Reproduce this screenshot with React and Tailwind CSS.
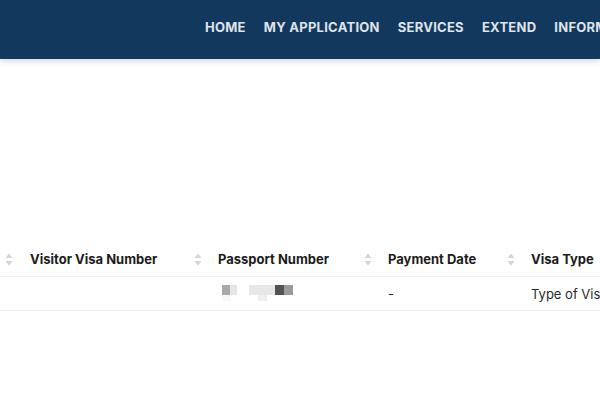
import React from 'react';

const navItems = ['HOME', 'MY APPLICATION', 'SERVICES', 'EXTEND', 'INFORMATION'];

const SortIcon = () => (
  <svg width="8" height="13" viewBox="0 0 8 13" className="shrink-0">
    <path d="M4 0.5 L7.5 5 L0.5 5 Z" fill="#d6d6d6" />
    <path d="M4 12.5 L7.5 8 L0.5 8 Z" fill="#d6d6d6" />
  </svg>
);

const columns = [
  { title: 'Visitor Visa Number', width: 'w-[188px]' },
  { title: 'Passport Number', width: 'w-[170px]' },
  { title: 'Payment Date', width: 'w-[143px]' },
  { title: 'Visa Type', width: 'w-[160px]' },
];

// blurred passport number, mosaic blocks
const Mosaic = () => (
  <div className="flex flex-col">
    <div className="flex h-[10px]">
      <div className="w-[8px] bg-[#a9a9a9]" />
      <div className="w-[7px] bg-[#e6e6e6]" />
      <div className="w-[12px] bg-white" />
      <div className="w-[26px] bg-[#e7e7e7]" />
      <div className="w-[9px] bg-[#535353]" />
      <div className="w-[9px] bg-[#9b9b9b]" />
    </div>
    <div className="flex h-[6px]">
      <div className="w-[8px] bg-[#f7f7f7]" />
      <div className="w-[28px] bg-white" />
      <div className="w-[9px] bg-[#efefef]" />
    </div>
  </div>
);

const App = () => {
  return (
    <div className="w-[600px] h-[400px] bg-white overflow-hidden font-['Inter','Liberation_Sans',sans-serif]">
      {/* Header */}
      <header className="h-[59px] bg-[#13385e] shadow-[0_2px_6px_rgba(60,90,130,0.25)] relative z-10 flex items-center pl-[205px] pb-[4px] overflow-hidden whitespace-nowrap">
        <nav className="flex gap-[18px] text-[13px] font-bold tracking-[0.02em] text-[#dfe4ea]">
          {navItems.map((item) => (
            <span key={item}>{item}</span>
          ))}
        </nav>
      </header>

      {/* Table */}
      <div className="mt-[182px] whitespace-nowrap overflow-hidden">
        <div className="flex h-[36px] pt-[2px] items-center border-b border-[#f0f0f0] text-[13px] font-bold text-[#1c1c1c]">
          <div className="w-[30px] shrink-0 pl-[5px] flex items-center">
            <SortIcon />
          </div>
          {columns.map((col, i) => (
            <div key={col.title} className={`${col.width} shrink-0 flex items-center justify-between pr-[16px]`}>
              <span>{col.title}</span>
              {i < columns.length - 1 && <SortIcon />}
            </div>
          ))}
        </div>
        <div className="flex h-[34px] pt-[3px] items-center border-b border-[#f0f0f0] text-[13px] text-[#2b2b2b]">
          <div className="w-[30px] shrink-0" />
          <div className="w-[188px] shrink-0" />
          <div className="w-[170px] shrink-0 pl-[4px] pb-[4px]">
            <Mosaic />
          </div>
          <div className="w-[143px] shrink-0">-</div>
          <div className="w-[160px] shrink-0">Type of Visa</div>
        </div>
      </div>
    </div>
  );
};

export default App;
